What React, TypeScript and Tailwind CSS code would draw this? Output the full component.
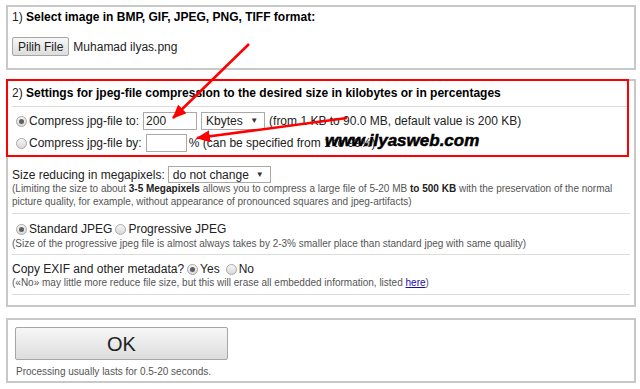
import React from "react";

function Radio({ checked }: { checked?: boolean }) {
  return (
    <span className="inline-flex w-[11px] h-[11px] rounded-full border border-[#a8a8a8] bg-linear-to-b from-[#f5f5f5] to-[#d9d9d9] items-center justify-center shrink-0">
      {checked && <span className="w-[5px] h-[5px] rounded-full bg-[#5f5f5f]" />}
    </span>
  );
}

function Select({ label, className }: { label: string; className: string }) {
  return (
    <span
      className={
        "inline-flex items-center justify-between border border-[#a9a9a9] bg-white pl-[4px] pr-[6px] " +
        className
      }
    >
      <span>{label}</span>
      <span className="text-[8px] text-[#333]">▼</span>
    </span>
  );
}

export default function App() {
  return (
    <div className="relative w-[640px] h-[389px] overflow-hidden bg-white pl-[6px] pr-[4px] pt-[5px] font-['Liberation_Sans',Arial,sans-serif] text-[12px] text-[#222] leading-none">
      {/* 1) file */}
      <div className="border-2 border-[#c8c8c8] h-[65px] px-[4px] pt-[2px]">
        <div className="h-[16px] flex items-center">
          <span className="whitespace-pre">1) </span>
          <b className="text-black">Select image in BMP, GIF, JPEG, PNG, TIFF format:</b>
        </div>
        <div className="mt-[12px] flex items-center gap-[4px]">
          <button className="h-[19px] px-[5px] border border-[#a6a6a6] rounded-[2px] bg-linear-to-b from-[#f7f7f7] to-[#dddddd] text-[12px]">
            Pilih File
          </button>
          <span>Muhamad ilyas.png</span>
        </div>
      </div>

      {/* 2) settings */}
      <div className="mt-[9px] border-2 border-[#c8c8c8] h-[228px]">
        <div className="-ml-[2px] -mt-[2px] w-[623px] border-2 border-[#ff0000] pb-[3px]">
          <div className="pt-[4px] pl-[4px] h-[20px] flex items-center">
            <span className="whitespace-pre">2) </span>
            <b className="text-black">
              Settings for jpeg-file compression to the desired size in kilobytes or in percentages
            </b>
          </div>
          <div className="mt-[5px] ml-[4px] h-px bg-[#dcdcdc]" />
          <div className="mt-[5px] pl-[8px] h-[18px] flex items-center">
            <Radio checked />
            <span className="ml-[2px]">Compress jpg-file to:</span>
            <span className="ml-[4px] w-[54px] h-[18px] border border-[#a9a9a9] flex items-center pl-[2px]">200</span>
            <Select label="Kbytes" className="ml-[4px] w-[64px] h-[18px]" />
            <span className="ml-[4px]">(from 1 KB to 90.0 MB, default value is 200 KB)</span>
          </div>
          <div className="mt-[4px] pl-[8px] h-[18px] flex items-center">
            <Radio />
            <span className="ml-[2px]">Compress jpg-file by:</span>
            <span className="ml-[4px] w-[41px] h-[18px] border border-[#a9a9a9]" />
            <span className="ml-[2px]">% (can be specified from 1 to 99%)</span>
          </div>
        </div>

        <div className="px-[4px]">
          <div className="mt-[9px] h-[17px] flex items-center">
            <span>Size reducing in megapixels:</span>
            <Select label="do not change" className="ml-[3px] w-[103px] h-[17px]" />
          </div>
          <p className="-mt-[1px] text-[10px] leading-[13px] text-[#555]">
            (Limiting the size to about <b className="text-[#222]">3-5 Megapixels</b> allows you to compress a large file of 5-20 MB{" "}
            <b className="text-[#222]">to 500 KB</b> with the preservation of the normal
            <br />
            picture quality, for example, without appearance of pronounced squares and jpeg-artifacts)
          </p>
          <div className="mt-[5px] h-px bg-[#dcdcdc]" />

          <div className="mt-[7px] pl-[4px] h-[16px] flex items-center">
            <Radio checked />
            <span className="ml-[2px]">Standard JPEG</span>
            <span className="ml-[3px]" />
            <Radio />
            <span className="ml-[2px]">Progressive JPEG</span>
          </div>
          <p className="text-[10px] leading-[13px] text-[#555]">
            (Size of the progressive jpeg file is almost always takes by 2-3% smaller place than standard jpeg with same quality)
          </p>
          <div className="mt-[4px] h-px bg-[#dcdcdc]" />

          <div className="mt-[6px] h-[16px] flex items-center">
            <span>Copy EXIF and other metadata?</span>
            <span className="ml-[3px]" />
            <Radio checked />
            <span className="ml-[2px]">Yes</span>
            <span className="ml-[6px]" />
            <Radio />
            <span className="ml-[2px]">No</span>
          </div>
          <p className="-mt-[1px] text-[10px] leading-[13px] text-[#555]">
            («No» may little more reduce file size, but this will erase all embedded information, listed{" "}
            <a className="text-[#1a0dab] underline">here</a>)
          </p>
          <div className="mt-[5px] h-px bg-[#dcdcdc]" />
        </div>
      </div>

      {/* OK */}
      <div className="mt-[11px] border-2 border-[#c8c8c8] h-[65px] pl-[7px] pt-[7px]">
        <button className="w-[213px] h-[33px] border border-[#a6a6a6] rounded-[2px] bg-linear-to-b from-[#f7f7f7] to-[#dddddd] text-[20px] text-[#222]">
          OK
        </button>
        <p className="mt-[5px] ml-[1px] text-[10px] leading-[13px] text-[#555]">
          Processing usually lasts for 0.5-20 seconds.
        </p>
      </div>

      {/* annotations */}
      <span className="absolute left-[325px] top-[132px] font-['Liberation_Sans',sans-serif] text-[17px] font-bold italic text-black leading-none [-webkit-text-stroke:0.5px_black]">
        www.ilyasweb.com
      </span>
      <svg className="absolute inset-0 pointer-events-none" width="640" height="389">
        <defs>
          <marker id="ah" markerUnits="userSpaceOnUse" markerWidth="14" markerHeight="12" refX="13" refY="6" orient="auto">
            <path d="M0,0 L14,6 L0,12 z" fill="#ff0000" />
          </marker>
        </defs>
        <line x1="249" y1="44" x2="173" y2="118" stroke="#ff0000" strokeWidth="2.5" markerEnd="url(#ah)" />
        <line x1="347" y1="118" x2="197" y2="138" stroke="#ff0000" strokeWidth="2.5" markerEnd="url(#ah)" />
      </svg>
    </div>
  );
}
